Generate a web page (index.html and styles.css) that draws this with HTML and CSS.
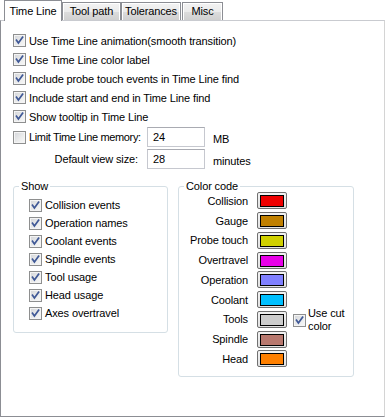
FILE: index.html
```html
<!DOCTYPE html>
<html>
<head>
<meta charset="utf-8">
<link rel="stylesheet" href="styles.css">
</head>
<body>
<div class="dialog">
  <div class="tabs">
    <div class="tab active">Time Line</div>
    <div class="tab w-tool">Tool path</div>
    <div class="tab w-tol">Tolerances</div>
    <div class="tab w-misc">Misc</div>
  </div>
  <div class="panel">
    <div class="opts">
      <label class="chk"><span class="box"><svg viewBox="0 0 11 11"><path d="M2.5 5.2 L4.4 8 L8.6 2.2"/></svg></span>Use Time Line animation(smooth transition)</label>
      <label class="chk"><span class="box"><svg viewBox="0 0 11 11"><path d="M2.5 5.2 L4.4 8 L8.6 2.2"/></svg></span>Use Time Line color label</label>
      <label class="chk"><span class="box"><svg viewBox="0 0 11 11"><path d="M2.5 5.2 L4.4 8 L8.6 2.2"/></svg></span>Include probe touch events in Time Line find</label>
      <label class="chk"><span class="box"><svg viewBox="0 0 11 11"><path d="M2.5 5.2 L4.4 8 L8.6 2.2"/></svg></span>Include start and end in Time Line find</label>
      <label class="chk"><span class="box"><svg viewBox="0 0 11 11"><path d="M2.5 5.2 L4.4 8 L8.6 2.2"/></svg></span>Show tooltip in Time Line</label>
    </div>
    <div class="limits">
      <label class="chk tight"><span class="box"></span>Limit Time Line memory:</label>
      <div class="field">24</div>
      <span class="unit">MB</span>
      <span class="lbl">Default view size:</span>
      <div class="field">28</div>
      <span class="unit">minutes</span>
    </div>
    <div class="groups">
      <fieldset class="grp grp-show">
        <legend>Show</legend>
        <div class="show-list">
          <label class="chk"><span class="box"><svg viewBox="0 0 11 11"><path d="M2.5 5.2 L4.4 8 L8.6 2.2"/></svg></span>Collision events</label>
          <label class="chk"><span class="box"><svg viewBox="0 0 11 11"><path d="M2.5 5.2 L4.4 8 L8.6 2.2"/></svg></span>Operation names</label>
          <label class="chk"><span class="box"><svg viewBox="0 0 11 11"><path d="M2.5 5.2 L4.4 8 L8.6 2.2"/></svg></span>Coolant events</label>
          <label class="chk"><span class="box"><svg viewBox="0 0 11 11"><path d="M2.5 5.2 L4.4 8 L8.6 2.2"/></svg></span>Spindle events</label>
          <label class="chk"><span class="box"><svg viewBox="0 0 11 11"><path d="M2.5 5.2 L4.4 8 L8.6 2.2"/></svg></span>Tool usage</label>
          <label class="chk"><span class="box"><svg viewBox="0 0 11 11"><path d="M2.5 5.2 L4.4 8 L8.6 2.2"/></svg></span>Head usage</label>
          <label class="chk"><span class="box"><svg viewBox="0 0 11 11"><path d="M2.5 5.2 L4.4 8 L8.6 2.2"/></svg></span>Axes overtravel</label>
        </div>
      </fieldset>
      <fieldset class="grp grp-color">
        <legend>Color code</legend>
        <div class="color-grid">
          <span class="clbl">Collision</span><span class="sw"><span class="c-collision"></span></span>
          <span class="clbl">Gauge</span><span class="sw"><span class="c-gauge"></span></span>
          <span class="clbl">Probe touch</span><span class="sw"><span class="c-probe"></span></span>
          <span class="clbl">Overtravel</span><span class="sw"><span class="c-over"></span></span>
          <span class="clbl">Operation</span><span class="sw"><span class="c-op"></span></span>
          <span class="clbl">Coolant</span><span class="sw"><span class="c-cool"></span></span>
          <span class="clbl">Tools</span><span class="sw"><span class="c-tools"></span></span>
          <span class="clbl">Spindle</span><span class="sw"><span class="c-spindle"></span></span>
          <span class="clbl">Head</span><span class="sw"><span class="c-head"></span></span>
          <label class="chk cut"><span class="box"><svg viewBox="0 0 11 11"><path d="M2.5 5.2 L4.4 8 L8.6 2.2"/></svg></span><span>Use cut<br>color</span></label>
        </div>
      </fieldset>
    </div>
  </div>
</div>
</body>
</html>
```

FILE: styles.css
```css
* { box-sizing: border-box; }
html, body { margin: 0; padding: 0; background: #ffffff; }
body {
  font-family: "Liberation Sans", Arial, sans-serif;
  font-size: 11px;
  letter-spacing: -0.12px;
  color: #000;
  width: 386px;
  height: 418px;
}
.dialog { width: 385px; }

.tabs {
  display: flex;
  align-items: flex-end;
  height: 21px;
  padding-left: 4px;
  position: relative;
  z-index: 2;
}
.tab {
  height: 18px;
  line-height: 16px;
  text-align: center;
  border: 1px solid #8c8e94;
  border-bottom: none;
  background: linear-gradient(#f3f3f3 0%, #ebebeb 50%, #dddddd 51%, #d0d0d0 100%);
  box-shadow: inset 1px 1px 0 #ffffff, inset -1px 0 0 #ffffff;
  margin-bottom: 1px;
}
.tab.active {
  width: 58px;
  height: 21px;
  line-height: 18px;
  background: #fff;
  box-shadow: none;
  margin-bottom: 0;
  padding-top: 1px;
}
.w-tool { width: 59px; margin-left: 0; }
.w-tol { width: 60px; }
.w-misc { width: 41px; margin-left: 1px; }

.panel {
  height: 397px;
  margin-top: -1px;
  border-top: 1px solid #c9cbd0;
  border-right: 1px solid #d4d4d4;
  border-left: 1px solid #8c8e94;
  border-bottom: 1px solid #8c8e94;
  background: #fff;
  padding: 10px 0 0 12px;
}

.chk {
  display: flex;
  align-items: center;
  white-space: nowrap;
}
.box {
  flex: none;
  width: 13px;
  height: 13px;
  border: 1px solid #8e8f8f;
  margin-right: 3px;
  background: linear-gradient(135deg, #d2d4d8 0%, #eceded 60%, #f8f8f8 100%);
  box-shadow: inset 0 0 0 1px #f4f4f4;
  display: flex;
  align-items: center;
  justify-content: center;
}
.box svg { width: 11px; height: 11px; display: block; }
.box path { fill: none; stroke: #3f5896; stroke-width: 1.7; stroke-linecap: square; stroke-linejoin: miter; }

.opts .chk { height: 19px; }

.limits {
  margin-top: 1px;
  display: grid;
  grid-template-columns: 134px 58px auto;
  grid-auto-rows: 20px;
  row-gap: 2px;
  align-items: center;
}
.tight { letter-spacing: -0.35px; }
.lbl { text-align: right; padding-right: 9px; }
.field {
  height: 20px;
  border: 1px solid #c6c8cf;
  border-top-color: #a9abb2;
  line-height: 18px;
  padding-left: 5px;
}
.unit { padding-left: 8px; padding-top: 3px; }

.groups {
  display: flex;
  gap: 10px;
  margin-top: 11px;
  align-items: flex-start;
}
.grp {
  margin: 0;
  min-width: 0;
  border: 1px solid #d5dfe5;
  border-radius: 3px;
  padding: 0 0 0 5px;
}
.grp legend {
  padding: 0 2px;
  line-height: 13px;
}
.grp-show { width: 155px; height: 153px; }
.grp-color { width: 176px; height: 197px; }

.show-list { padding: 3px 0 0 10px; }
.show-list .chk { height: 18px; }

.color-grid {
  display: grid;
  grid-template-columns: 64px 30px auto;
  grid-template-rows: repeat(9, 19.75px);
  column-gap: 9px;
  align-items: center;
  margin-top: -2px;
}
.clbl { grid-column: 1; text-align: right; }
.sw {
  grid-column: 2;
  width: 30px;
  height: 17px;
  border: 1px solid #707070;
  border-radius: 2px;
  background: linear-gradient(#f2f2f2, #e1e1e1);
  padding: 2px 2px 1px 2px;
  display: flex;
}
.sw span { flex: 1; border: 1px solid #000; }
.c-collision { background: #ee0000; }
.c-gauge { background: #c08000; }
.c-probe { background: #d0d000; }
.c-over { background: #e800e8; }
.c-op { background: #8080ff; }
.c-cool { background: #00c0ff; }
.c-tools { background: #cccccc; }
.c-spindle { background: #b8786e; }
.c-head { background: #ff8000; }

.cut {
  grid-column: 3;
  grid-row: 6 / 9;
  align-self: center;
  margin-left: -3px;
  line-height: 13px;
  padding-top: 2px;
}
.cut .box { margin-right: 2px; }
```
